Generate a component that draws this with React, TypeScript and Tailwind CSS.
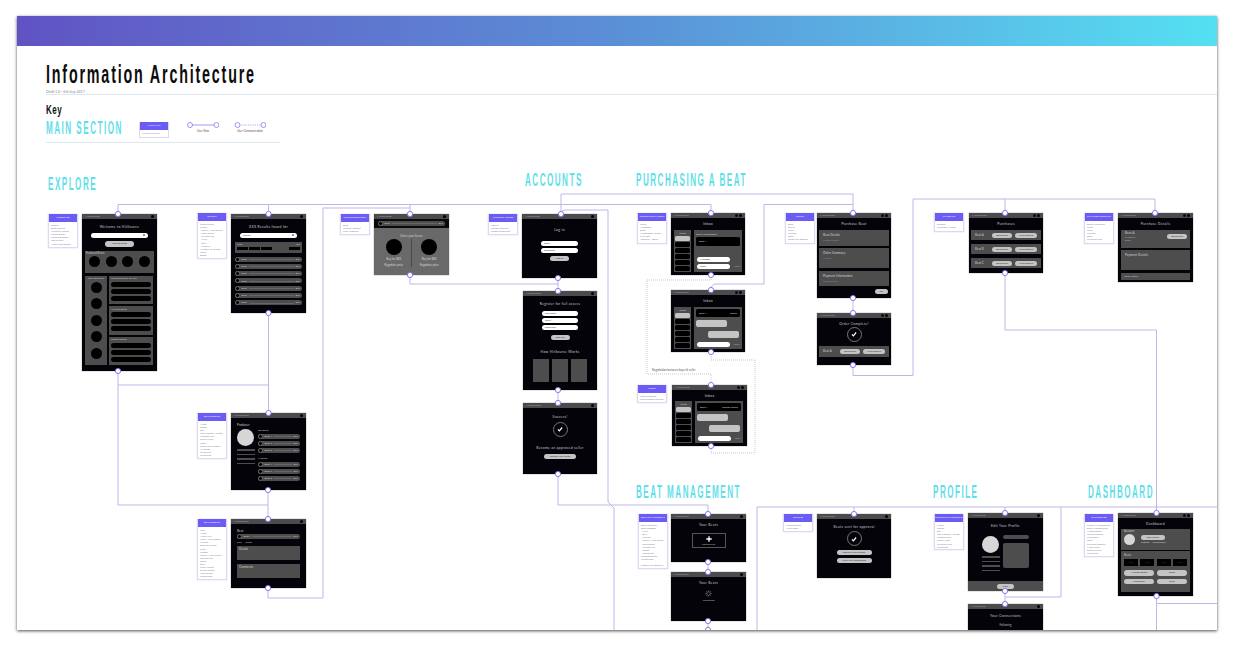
import React from "react";

const LINE = "#bdb7e8";
const solid = [
  "M118 214V204.500H711V213",
  "M268.500 204.500V214",
  "M410 204.500V214",
  "M561 214V194H853V213",
  "M561 214Q561 210 565 210H608V502L614 508V630",
  "M323 598V208H410",
  "M268 588V598H323",
  "M118 371V505H268",
  "M118 385H268",
  "M268.500 313V413",
  "M268 490V519",
  "M410 275V284H558",
  "M558 278V291",
  "M558 390V403",
  "M558 474V505H708V514",
  "M711 290Q711 284 716 284H764V204.500H853",
  "M853 298V313",
  "M853 365V375.500H913V199H1155V213",
  "M1005 199V213",
  "M1005 273V330H1156.500V513",
  "M757 630V507H1217",
  "M854 507V514",
  "M1005 507V513",
  "M1061 507V597H1005",
  "M1005 591V604",
  "M1156.500 596V630",
  "M1156.500 603.500H1217",
  "M708 562V572",
  "M708 621V630",
];
const dotted = [
  "M711 275V280H647V374H711V385",
  "M711 352V360H755V453H711V446",
];
const dots: [number, number][] = [
  [118, 214], [118, 371], [268.5, 214], [268.5, 313], [268.5, 413], [268, 490], [268, 519], [268, 588],
  [410, 214], [410, 275], [561, 214], [558, 278], [558, 291], [558, 390], [558, 403], [558, 474],
  [711, 213], [711, 275], [711, 290], [711, 352], [711, 385], [711, 446],
  [853, 213], [853, 298], [853, 313], [853, 365], [1005, 213], [1005, 273], [1155, 213],
  [708, 514], [708, 562], [708, 572], [708, 621], [708, 630],
  [854, 514], [1005, 513], [1005, 591], [1005, 604], [1156.5, 513], [1156.5, 596],
];

function Win({ cls, body = "bg-[#04030a]", two, children }: { cls: string; body?: string; two?: boolean; children: React.ReactNode }) {
  return (
    <div className={`absolute flex flex-col overflow-hidden font-['Lato','Liberation_Sans',sans-serif] shadow-[0_0_1px_rgba(0,0,0,0.6)] ${cls}`}>
      <div className="flex h-[5px] shrink-0 items-center justify-between bg-[#4b4b4d] px-[3px]">
        <span className="text-[2.2px] leading-none tracking-[0.3px] text-[#bbbbbb]">HITSOURCE</span>
        <span className="flex gap-[1.5px]">
          {two && <i className="h-[3px] w-[3px] rounded-full bg-[#0a0a0a]" />}
          <i className="h-[3px] w-[3px] rounded-full bg-black" />
        </span>
      </div>
      <div className={`flex min-h-0 flex-1 flex-col ${body}`}>{children}</div>
    </div>
  );
}

function Title({ mt, children }: { mt: string; children: React.ReactNode }) {
  return <div className={`${mt} h-[4px] shrink-0 text-center text-[3.4px] leading-[4px] tracking-[0.3px] text-[#c9c9c9]`}>{children}</div>;
}

function Note({ cls, title, items }: { cls: string; title: string; items: string[] }) {
  return (
    <div className={`absolute flex flex-col border border-t-0 border-[#dcd9f3] bg-white font-['Lato','Liberation_Sans',sans-serif] shadow-[0_0_1px_rgba(90,80,200,0.35)] ${cls}`}>
      <div className="flex h-[8px] shrink-0 items-center justify-center bg-[#6b5cf5] text-[2.4px] font-bold leading-none text-[#e8e6ff]">{title}</div>
      <div className="px-[2px] pt-[2px]">
        {items.map((t, i) => (
          <div key={i} className="h-[3.1px] whitespace-pre text-[2.6px] leading-[3.1px] text-[#8a8a9c]">{t}</div>
        ))}
      </div>
    </div>
  );
}

function Heading({ cls, children }: { cls: string; children: React.ReactNode }) {
  return (
    <div className={`absolute origin-left scale-x-[0.45] whitespace-nowrap font-['Liberation_Sans',sans-serif] text-[18px] font-bold leading-[13px] tracking-[3.3px] text-[#5fdfe8] ${cls}`}>
      {children}
    </div>
  );
}

function Pill({ cls, children, tone = "bg-[#c4c4c4] text-[#333333]" }: { cls: string; children?: React.ReactNode; tone?: string }) {
  return (
    <div className={`flex shrink-0 items-center justify-center rounded-full text-[2.6px] leading-none ${tone} ${cls}`}>{children}</div>
  );
}

function Input({ cls, children }: { cls: string; children?: React.ReactNode }) {
  return (
    <div className={`flex shrink-0 items-center rounded-full bg-white px-[3px] text-[2.6px] leading-none text-[#444444] ${cls}`}>{children}</div>
  );
}

function BeatRow({ cls, name = "Beat", fade = "bg-[#666666]" }: { cls: string; name?: string; fade?: string }) {
  return (
    <div className={`flex h-[5px] shrink-0 items-center rounded-full bg-[#4d4d4d] pr-[2px] text-[2.6px] leading-none text-[#cfcfcf] ${cls}`}>
      <i className="mr-[1.5px] h-[5px] w-[5px] shrink-0 rounded-full border-[0.5px] border-[#666] bg-black" />
      <span className="whitespace-nowrap">{name}</span>
      <i className={`mx-[2px] h-[0.5px] flex-1 ${fade}`} />
      <span>Buy</span>
    </div>
  );
}

function Check() {
  return (
    <div className="flex h-[15px] w-[15px] shrink-0 items-center justify-center rounded-full border-[0.5px] border-[#777777]">
      <svg viewBox="0 0 10 10" className="h-[6px] w-[6px]">
        <path d="M1.500 5.500L4 8L8.500 2.500" fill="none" stroke="#ffffff" strokeWidth="2" />
      </svg>
    </div>
  );
}

function Chats({ panel, children }: { panel: string; children: React.ReactNode }) {
  return (
    <div className={`flex gap-[3px] px-[3px] ${panel}`}>
      <div className="flex h-[42px] w-[17px] flex-col items-center bg-[#4d4d4d] pt-[1px]">
        <div className="h-[4px] text-[2.6px] leading-[4px] text-[#c9c9c9]">Chats</div>
        <div className="mt-[1px] flex flex-col gap-[1px]">
          <i className="h-[5px] w-[15px] rounded-[1.5px] bg-[#c4c4c4]" />
          {[0, 1, 2, 3, 4].map((i) => (
            <i key={i} className="h-[5px] w-[15px] rounded-[1.5px] bg-black" />
          ))}
        </div>
      </div>
      <div className="flex h-[42px] w-[48px] flex-col bg-[#4d4d4d] px-[2px] text-[2.6px] text-[#cfcfcf]">{children}</div>
    </div>
  );
}

function Convo({ status }: { status: string }) {
  return (
    <>
      <div className="mt-[2px] flex h-[8px] shrink-0 items-center justify-between rounded-[1.5px] bg-black px-[3px] leading-none">
        <span>Beat A</span>
        <span>{status}</span>
      </div>
      <i className="mt-[3px] h-[7px] w-[31px] shrink-0 rounded-[2px] bg-[#c4c4c4]" />
      <i className="ml-[12px] mt-[3.500px] h-[7px] w-[31px] shrink-0 rounded-[2px] bg-[#c4c4c4]" />
      <div className="mt-[4px] flex items-center justify-between leading-none">
        <Input cls="ml-[1px] h-[5px] w-[33px]" />
        <span className="text-[#a5a5a5]">Reply</span>
      </div>
    </>
  );
}

function Panel({ cls, label, sub }: { cls: string; label: string; sub?: string }) {
  return (
    <div className={`shrink-0 bg-[#4d4d4d] px-[4px] pt-[3px] ${cls}`}>
      <div className="text-[3.2px] leading-[4px] text-[#cfcfcf]">{label}</div>
      {sub && <div className="mt-[2px] text-[2.6px] leading-[3px] text-[#8c8c8c]">{sub}</div>}
    </div>
  );
}

function PurchaseRow({ label, mt }: { label: string; mt: string }) {
  return (
    <div className={`mx-[2px] flex h-[10px] shrink-0 items-center bg-[#4d4d4d] pl-[4px] text-[3px] text-[#cfcfcf] ${mt}`}>
      <span className="w-[17px]">{label}</span>
      <Pill cls="h-[5px] w-[20px]">Download</Pill>
      <Pill cls="ml-[3px] h-[5px] w-[22px]">View Details</Pill>
    </div>
  );
}

function Circles({ n, cls }: { n: number; cls: string }) {
  return <>{Array.from({ length: n }, (_, i) => <i key={i} className={`shrink-0 rounded-full bg-black ${cls}`} />)}</>;
}

function Bars({ n }: { n: number }) {
  return <div className="mt-[1.500px] flex flex-col gap-[2px] px-[2px]">{Array.from({ length: n }, (_, i) => <i key={i} className="h-[5px] rounded-full bg-black" />)}</div>;
}

export default function App() {
  return (
    <div className="h-[646px] w-[1235px] overflow-hidden bg-white pl-[17px] pt-[16px]">
      <div className="relative flex h-[614px] w-[1200px] flex-col overflow-hidden bg-white shadow-[0_1px_3px_rgba(0,0,0,0.7)]">
        <div className="h-[30px] shrink-0 bg-gradient-to-r from-[#6053c4] via-[#5a8fd6] to-[#54e0f2]" />
        <div className="ml-[29px] h-[49px] shrink-0 border-b border-[#dde9f0] pt-[18px]">
          <h1 className="inline-block origin-left scale-x-[0.55] whitespace-nowrap font-['Liberation_Sans',sans-serif] text-[26px] font-bold leading-[21px] tracking-[3.300px] text-[#0c0c0c]">
            Information Architecture
          </h1>
          <div className="mt-[1px] font-['Lato','Liberation_Sans',sans-serif] text-[3.6px] leading-[4px] text-[#888888]">Draft 1.0 - 6th Sep 2017</div>
        </div>
        <div className="ml-[29px] flex h-[48px] w-[234px] shrink-0 flex-col border-b border-[#dde9f0] pt-[9px]">
          <div className="origin-left scale-x-[0.62] font-['Liberation_Sans',sans-serif] text-[13px] font-bold leading-[12px] tracking-[0.8px] text-[#111111]">Key</div>
          <div className="mt-[6px] flex items-start">
            <div className="w-[93px] origin-left scale-x-[0.45] whitespace-nowrap font-['Liberation_Sans',sans-serif] text-[18px] font-bold leading-[13px] tracking-[3.3px] text-[#5fdfe8]">MAIN SECTION</div>
            <div className="flex h-[16px] w-[30px] flex-col border border-t-0 border-[#dcd9f3] font-['Lato',sans-serif]">
              <div className="flex h-[8px] shrink-0 items-center justify-center bg-[#6b5cf5] text-[2.4px] leading-none text-[#e8e6ff]">PAGE TITLE</div>
              <div className="px-[2px] pt-[1.500px] text-[2.6px] leading-[3px] text-[#999999]">Content Guides</div>
            </div>
            <div className="ml-[18px] flex w-[32px] flex-col items-center font-['Lato',sans-serif]">
              <svg width="32" height="6" viewBox="0 0 32 6">
                <path d="M5 3H27" stroke="#8a7ee6" strokeWidth="0.8" />
                <circle cx="3" cy="3" r="2.5" fill="#fff" stroke="#8a7ee6" strokeWidth="0.8" />
                <circle cx="29.500" cy="3" r="2.5" fill="#fff" stroke="#8a7ee6" strokeWidth="0.8" />
              </svg>
              <span className="mt-[1px] text-[2.8px] leading-[4px] text-[#555555]">User flow</span>
            </div>
            <div className="ml-[15px] flex w-[32px] flex-col items-center font-['Lato',sans-serif]">
              <svg width="32" height="6" viewBox="0 0 32 6">
                <path d="M5 3H27" stroke="#8a7ee6" strokeWidth="0.8" strokeDasharray="0.8 1" />
                <circle cx="3.500" cy="3" r="2.5" fill="#fff" stroke="#8a7ee6" strokeWidth="0.8" />
                <circle cx="30.500" cy="3" r="1.500" fill="#fff" stroke="#8a7ee6" strokeWidth="0" />
                <circle cx="29.500" cy="3" r="2.5" fill="#fff" stroke="#8a7ee6" strokeWidth="0.8" />
              </svg>
              <span className="mt-[1px] whitespace-nowrap text-[2.8px] leading-[4px] text-[#555555]">User Communication</span>
            </div>
          </div>
        </div>

        {/* free canvas, in page coordinates */}
        <div className="absolute left-[-17px] top-[-16px] h-[646px] w-[1235px]">
          <Heading cls="left-[48px] top-[178px]">EXPLORE</Heading>
          <Heading cls="left-[525px] top-[174px]">ACCOUNTS</Heading>
          <Heading cls="left-[636px] top-[174px]">PURCHASING A BEAT</Heading>
          <Heading cls="left-[636px] top-[486px]">BEAT MANAGEMENT</Heading>
          <Heading cls="left-[933px] top-[486px]">PROFILE</Heading>
          <Heading cls="left-[1088px] top-[486px]">DASHBOARD</Heading>

          <Note cls="left-[48px] top-[214px] h-[34px] w-[30px]" title="HOMEPAGE" items={["Search", "Beat Upload", "Account Access", "Latest Beats", "Featured Beats", "Top Sellers", "Most Liked Beats"]} />
          <Note cls="left-[197px] top-[213px] h-[46px] w-[30px]" title="SEARCH" items={["Search term", "Filters", "  Genre / Sub Genre", "  Instrument", "  Sounds like", "  Price", "  BPM", "  License", "Number of results", "Users", "Beats"]} />
          <Note cls="left-[340px] top-[214px] h-[21px] w-[30px]" title="LICENSE SELECTION" items={["Beat", "License options", "Price Options"]} />
          <Note cls="left-[488px] top-[214px] h-[21px] w-[30px]" title="ACCOUNT ACCESS" items={["Sign in", "Create account", "Forgot Password"]} />
          <Note cls="left-[637px] top-[213px] h-[31px] w-[30px]" title="NEGOTIATION INBOX" items={["Users", "Messages", "Beat", "Negotiation Status", "Price Bid", "Approve / Deny"]} />
          <Note cls="left-[785px] top-[213px] h-[31px] w-[30px]" title="STRIPE" items={["Beat", "Buyer", "Price", "License", "Date", "Stripe Pay Details"]} />
          <Note cls="left-[637px] top-[385px] h-[18px] w-[30px]" title="INBOX" items={["Conversations", "Conversation thread"]} />
          <Note cls="left-[197px] top-[413px] h-[46px] w-[30px]" title="BEAT PROFILE" items={["Name", "Image", "Bio", "Top 5 Beats / Songs", "Contact Info", "Social Links", "Share", "Seller/User Status", "All Beats", "Followers", "Following"]} />
          <Note cls="left-[197px] top-[519px] h-[61px] w-[30px]" title="BEAT PROFILE" items={["Title", "Name", "Audio File", "Price / Sale Status", "License", "Beat on Shops", "Likes", "Length", "Genre / Sub Genre", "Sounds like", "Share", "BPM", "Track Count", "Stems Status", "Instrument", "Comments"]} />
          <Note cls="left-[934px] top-[213px] h-[19px] w-[30px]" title="PAYMENTS" items={["Receipt", "Purchase History"]} />
          <Note cls="left-[1084px] top-[213px] h-[31px] w-[30px]" title="E-PAYMENT DETAILS" items={["Beat Purchased", "Seller", "Price", "License", "Date", "Payment Info"]} />
          <Note cls="left-[638px] top-[514px] h-[55px] w-[30px]" title="BEAT MANAGEMENT" items={["Beat Uploader", "Beat Settings", "  Price", "  BPM", "  License", "  Genre / Sub Genre", "  Instrument", "  Sounds like", "  Stems", "  Structures", "Existing Beats", "Comments", "", "Submit for approval"]} />
          <Note cls="left-[783px] top-[514px] h-[18px] w-[30px]" title="UPLOAD" items={["Confirmation", "Next Steps"]} />
          <Note cls="left-[934px] top-[514px] h-[36px] w-[30px]" title="PROFILE MANAGEMENT" items={["Name", "Image", "Bio", "Top 5 Beats / Songs", "Contact Info", "Social Links", "Payment Info", "Following"]} />
          <Note cls="left-[1084px] top-[514px] h-[43px] w-[30px]" title="DASHBOARD" items={["Profile Management", "Beat Management", "Notifications", "Conversations", "Purchases", "Sales", "Payment Details", "Most Liked", "Beats Played", "Followers"]} />

          {/* Homepage */}
          <Win cls="left-[82px] top-[214px] h-[157px] w-[75px]">
            <Title mt="mt-[6px]">Welcome to HitSource</Title>
            <Input cls="mx-[9px] mt-[3.500px] h-[5px] justify-end"><i className="h-[2px] w-[2px] rounded-full border-[0.5px] border-[#444]" /></Input>
            <Pill cls="mx-auto mt-[3.500px] h-[5.500px] w-[29px] text-[#222222]">Upload beats</Pill>
            <div className="mx-[3px] mt-[4px] h-[22px] shrink-0 bg-[#4d4d4d] px-[1px]">
              <div className="text-[2.8px] leading-[4px] text-[#c9c9c9]">Featured Beats</div>
              <div className="mt-[1px] flex justify-around"><Circles n={4} cls="h-[11px] w-[11px]" /></div>
            </div>
            <div className="mx-[3px] mt-[3px] flex gap-[2px]">
              <div className="flex h-[89px] w-[22px] flex-col items-center bg-[#4d4d4d]">
                <div className="text-[2.6px] leading-[4px] text-[#c9c9c9]">Top Producers</div>
                <div className="mt-[2px] flex flex-col gap-[5.500px]"><Circles n={5} cls="h-[11px] w-[11px]" /></div>
              </div>
              <div className="flex w-[44px] flex-col gap-[2px]">
                {["Recommended for you", "Newest Beats", "Popular Beats"].map((t) => (
                  <div key={t} className="h-[28.500px] bg-[#4d4d4d] pt-[0.500px]">
                    <div className="px-[2px] text-[2.6px] leading-[4px] text-[#c9c9c9]">{t}</div>
                    <Bars n={3} />
                  </div>
                ))}
              </div>
            </div>
          </Win>

          {/* Search */}
          <Win cls="left-[231px] top-[214px] h-[99px] w-[75px]">
            <Title mt="mt-[6px]">XXX Results found for</Title>
            <Input cls="mx-[9px] mt-[3.500px] h-[5px] justify-between"><span>search</span><i className="h-[2px] w-[2px] rounded-full border-[0.5px] border-[#444]" /></Input>
            <div className="mx-[4px] mt-[4px] h-[11px] shrink-0 bg-[#4d4d4d] px-[2px] pt-[1px]">
              <div className="flex justify-between text-[2.4px] leading-[3px] text-[#c9c9c9]"><span>Filter</span><span>Sort</span></div>
              <div className="mt-[1px] flex gap-[1px]">
                <i className="h-[3px] w-[11px] bg-black" /><i className="h-[3px] w-[11px] bg-black" /><i className="h-[3px] w-[11px] bg-black" />
                <i className="ml-auto h-[3px] w-[11px] bg-black" />
              </div>
            </div>
            <div className="mx-[4px] mt-[4px] flex flex-col gap-[2.300px]">
              {[0, 1, 2, 3, 4, 5, 6].map((i) => <BeatRow key={i} cls="" />)}
            </div>
          </Win>

          {/* License */}
          <Win cls="left-[374px] top-[214px] h-[61px] w-[75px]" body="bg-[#696969]">
            <div className="flex h-[9px] shrink-0 items-center bg-[#0a0a0c] px-[4px]"><BeatRow cls="w-full bg-[#3f3f3f]" /></div>
            <div className="mt-[5.500px] text-center text-[2.8px] leading-[4px] text-[#d0d0d0]">Select your license</div>
            <div className="relative mt-[1.500px] flex justify-around px-[3px] text-center text-[2.8px] leading-[4px] text-[#d8d8d8]">
              <div className="flex w-[32px] flex-col items-center"><i className="mb-[2px] h-[16px] w-[16px] rounded-full bg-black" />Buy for $XX<span className="mt-[1.500px]">Negotiate price</span></div>
              <i className="h-[28px] w-[0.5px] bg-[#4a4a4a]" />
              <div className="flex w-[32px] flex-col items-center"><i className="mb-[2px] h-[16px] w-[16px] rounded-full bg-black" />Buy for $XX<span className="mt-[1.500px]">Negotiate price</span></div>
            </div>
          </Win>

          {/* Log in */}
          <Win cls="left-[522px] top-[214px] h-[64px] w-[75px]">
            <Title mt="mt-[9px]">Log in</Title>
            <Input cls="mx-[19px] mt-[9px] h-[5px]">email</Input>
            <Input cls="mx-[19px] mt-[2px] h-[5px]">password</Input>
            <Pill cls="mx-auto mt-[3px] h-[5px] w-[19px]">Log in</Pill>
          </Win>

          {/* Register */}
          <Win cls="left-[523px] top-[291px] h-[99px] w-[74px]">
            <Title mt="mt-[6px]">Register for full access</Title>
            <Input cls="mx-[19px] mt-[5px] h-[5px]">username</Input>
            <Input cls="mx-[19px] mt-[2px] h-[5px]">email</Input>
            <Input cls="mx-[19px] mt-[2px] h-[5px]">password</Input>
            <Pill cls="mx-auto mt-[5px] h-[5px] w-[19px]">Sign Up</Pill>
            <Title mt="mt-[10px]">How HitSource Works</Title>
            <div className="mt-[5px] flex justify-center gap-[3px]">
              <i className="h-[23px] w-[16px] bg-[#4d4d4d]" /><i className="h-[23px] w-[16px] bg-[#4d4d4d]" /><i className="h-[23px] w-[16px] bg-[#4d4d4d]" />
            </div>
          </Win>

          {/* Success */}
          <Win cls="left-[523px] top-[403px] h-[71px] w-[74px]">
            <Title mt="mt-[6.500px]">Success!</Title>
            <div className="mt-[3px] flex justify-center"><Check /></div>
            <Title mt="mt-[9px]">Become an approved seller</Title>
            <Pill cls="mx-auto mt-[4px] h-[5px] w-[32px]">Upload your beats</Pill>
          </Win>

          {/* Producer */}
          <Win cls="left-[231px] top-[413px] h-[77px] w-[75px]">
            <div className="flex gap-[3px] pl-[6px] pr-[6px] pt-[5px]">
              <div className="flex w-[18px] shrink-0 flex-col">
                <div className="text-[3.2px] leading-[4px] text-[#c9c9c9]">Producer</div>
                <i className="mt-[2px] h-[17px] w-[17px] rounded-full bg-[#d6d6d6]" />
                <div className="mt-[3px] flex flex-col gap-[3px]">
                  {[0, 1, 2, 3].map((i) => <i key={i} className="h-[1.500px] bg-[#4d4d4d]" />)}
                </div>
              </div>
              <div className="flex min-w-0 flex-1 flex-col gap-[2px] pt-[6px]">
                <div className="text-[2.4px] leading-[3px] text-[#c9c9c9]">Top Beats</div>
                <BeatRow cls="" name="Beat 1" />
                <BeatRow cls="" name="Beat 2" />
                <BeatRow cls="" name="Beat 3" />
                <div className="mt-[1.500px] text-[2.4px] leading-[3px] text-[#c9c9c9]">All Beats</div>
                <BeatRow cls="" name="Beat 1" />
                <BeatRow cls="" name="Beat 2" />
                <BeatRow cls="" name="Beat 3" />
              </div>
            </div>
          </Win>

          {/* Beat */}
          <Win cls="left-[231px] top-[519px] h-[69px] w-[75px]">
            <div className="flex flex-col px-[6px] pt-[5px]">
              <div className="text-[3.2px] leading-[4px] text-[#c9c9c9]">Beat</div>
              <BeatRow cls="mt-[1px]" name="Beat 1" />
              <div className="mt-[1.500px] flex gap-[4px] text-[2.6px] leading-[3px] text-[#c9c9c9]"><span>Like</span><span>Share</span></div>
              <div className="mt-[2px] h-[14.500px] bg-[#4d4d4d] px-[2px] pt-[1px] text-[3px] leading-[4px] text-[#cfcfcf]">Details</div>
              <div className="mt-[3.500px] h-[14.500px] bg-[#4d4d4d] px-[2px] pt-[1px] text-[3px] leading-[4px] text-[#cfcfcf]">Comments</div>
            </div>
          </Win>

          {/* Inbox 1 */}
          <Win cls="left-[671px] top-[213px] h-[62px] w-[74px]" two>
            <Title mt="mt-[4px]">Inbox</Title>
            <Chats panel="mt-[4px]">
              <div className="pt-[2px] leading-[4px]">Start a negotiation</div>
              <div className="mt-[1px] flex h-[9px] shrink-0 items-center rounded-[1.5px] bg-black px-[3px] leading-none">Beat A</div>
              <Input cls="ml-[1px] mt-[11px] h-[5px] w-[33px]">Message</Input>
              <div className="mt-[2px] flex items-center justify-between leading-none">
                <Input cls="ml-[1px] h-[5px] w-[33px]">Offer</Input>
                <span className="text-[#a5a5a5]">Send</span>
              </div>
            </Chats>
          </Win>

          {/* Inbox 2 */}
          <Win cls="left-[671px] top-[290px] h-[62px] w-[74px]" two>
            <Title mt="mt-[4px]">Inbox</Title>
            <Chats panel="mt-[4px]"><Convo status="Status" /></Chats>
          </Win>

          {/* Inbox 3 */}
          <Win cls="left-[672px] top-[385px] h-[61px] w-[75px]" two>
            <Title mt="mt-[4px]">Inbox</Title>
            <Chats panel="mt-[3px]"><Convo status="Update Status" /></Chats>
          </Win>

          <div className="absolute left-[651px] top-[368px] bg-white px-[1px] font-['Lato',sans-serif] text-[2.8px] leading-[4px] text-[#555555]">Negotiation between buyer &amp; seller</div>

          {/* Purchase beat */}
          <Win cls="left-[817px] top-[213px] h-[85px] w-[74px]" two>
            <Title mt="mt-[4px]">Purchase Beat</Title>
            <div className="mx-[2px] mt-[4px] flex flex-col">
              <Panel cls="h-[16px]" label="Beat Details" sub="License Terms" />
              <Panel cls="mt-[2px] h-[20px]" label="Order Summary" sub="Pricing" />
              <Panel cls="mt-[3px] h-[15px]" label="Payment Information" sub="Stripe Details" />
              <Pill cls="ml-auto mr-[1px] mt-[3px] h-[5px] w-[13px]">Pay</Pill>
            </div>
          </Win>

          {/* Order complete */}
          <Win cls="left-[817px] top-[313px] h-[52px] w-[74px]" two>
            <Title mt="mt-[3.500px]">Order Complete!</Title>
            <div className="mt-[1px] flex justify-center"><Check /></div>
            <div className="mx-[2px] mt-[4px] flex h-[11px] items-center bg-[#4d4d4d] pl-[4px] text-[3px] text-[#cfcfcf]">
              <span className="w-[17px]">Beat A</span>
              <Pill cls="h-[5px] w-[20px]">Download</Pill>
              <Pill cls="ml-[3px] h-[5px] w-[22px]">View Details</Pill>
            </div>
          </Win>

          {/* Purchases */}
          <Win cls="left-[969px] top-[213px] h-[60px] w-[74px]" two>
            <Title mt="mt-[4px]">Purchases</Title>
            <PurchaseRow label="Beat A" mt="mt-[4px]" />
            <PurchaseRow label="Beat B" mt="mt-[4px]" />
            <PurchaseRow label="Beat C" mt="mt-[4px]" />
          </Win>

          {/* Purchase details */}
          <Win cls="left-[1118px] top-[213px] h-[69px] w-[75px]" two>
            <Title mt="mt-[4px]">Purchase Details</Title>
            <div className="mx-[3px] mt-[4px] flex h-[18px] shrink-0 justify-between bg-[#4d4d4d] pl-[4px] pr-[3px] pt-[2px] text-[2.6px] leading-[3.500px] text-[#a8a8a8]">
              <div><div className="text-[3.2px] text-[#cfcfcf]">Beat A</div>Producer<br />Date</div>
              <Pill cls="mt-[2px] h-[5px] w-[20px]">Download</Pill>
            </div>
            <Panel cls="mx-[3px] mt-[2px] h-[20px]" label="Payment Details" />
            <div className="mx-[3px] mt-[3px] flex h-[7px] shrink-0 items-center bg-[#4d4d4d] px-[3px] text-[2.6px] leading-none text-[#cfcfcf]">Chat History</div>
          </Win>

          {/* Your beats upload */}
          <Win cls="left-[671px] top-[514px] h-[48px] w-[75px]">
            <Title mt="mt-[4px]">Your Beats</Title>
            <div className="mx-auto mt-[6px] flex h-[15px] w-[34px] flex-col items-center justify-center border-[0.5px] border-[#555555]">
              <svg viewBox="0 0 10 10" className="h-[6px] w-[6px]"><path d="M5 0.500V9.500M0.500 5H9.500" stroke="#fff" strokeWidth="2.200" /></svg>
              <span className="mt-[1px] text-[2.6px] leading-[3px] text-[#bbbbbb]">Upload files</span>
            </div>
          </Win>

          {/* Your beats uploading */}
          <Win cls="left-[671px] top-[572px] h-[49px] w-[75px]">
            <Title mt="mt-[4px]">Your Beats</Title>
            <div className="mt-[5px] flex justify-center">
              <svg viewBox="0 0 12 12" className="h-[7px] w-[7px]" fill="none" stroke="#aaaaaa" strokeWidth="0.800">
                <circle cx="6" cy="6" r="3" />
                <path d="M6 0.500V2.500M6 9.500V11.500M0.500 6H2.500M9.500 6H11.500M2 2L3.500 3.500M8.500 8.500L10 10M10 2L8.500 3.500M3.500 8.500L2 10" />
              </svg>
            </div>
            <div className="mt-[2px] text-center text-[2.6px] leading-[3px] text-[#bbbbbb]">Uploading</div>
          </Win>

          {/* Beats sent */}
          <Win cls="left-[817px] top-[514px] h-[64px] w-[74px]">
            <Title mt="mt-[6px]">Beats sent for approval</Title>
            <div className="mt-[2px] flex justify-center"><Check /></div>
            <Pill cls="mx-auto mt-[4px] h-[5px] w-[35px]">Improve your profile</Pill>
            <Pill cls="mx-auto mt-[3px] h-[5px] w-[35px]">View your dashboard</Pill>
          </Win>

          {/* Edit profile */}
          <Win cls="left-[968px] top-[513px] h-[78px] w-[75px]">
            <Title mt="mt-[6px]">Edit Your Profile</Title>
            <div className="mt-[3px] flex gap-[3px] px-[14px]">
              <div className="flex w-[18px] shrink-0 flex-col pt-[5px]">
                <i className="h-[17px] w-[17px] rounded-full bg-[#d6d6d6]" />
                <div className="mt-[3px] flex flex-col gap-[3px]">
                  {[0, 1, 2, 3].map((i) => <i key={i} className="h-[1.500px] bg-[#4d4d4d]" />)}
                </div>
              </div>
              <div className="flex flex-1 flex-col gap-[4px] pt-[4px]">
                <i className="h-[4px] rounded-full bg-[#4d4d4d]" />
                <i className="h-[25px] rounded-[2px] bg-[#4d4d4d]" />
              </div>
            </div>
            <div className="mt-auto flex h-[10px] shrink-0 items-center justify-center bg-[#4d4d4d]"><Pill cls="h-[5px] w-[17px]">Save</Pill></div>
          </Win>

          {/* Connections */}
          <Win cls="left-[968px] top-[604px] h-[50px] w-[75px]">
            <Title mt="mt-[5px]">Your Connections</Title>
            <div className="mt-[5px] text-center text-[2.8px] leading-[4px] text-[#bbbbbb]">Following</div>
          </Win>

          {/* Dashboard */}
          <Win cls="left-[1118px] top-[513px] h-[83px] w-[75px]" two>
            <Title mt="mt-[4px]">Dashboard</Title>
            <div className="mx-[3px] mt-[2.500px] h-[21px] shrink-0 bg-[#4d4d4d] px-[3px] text-[#c9c9c9]">
              <div className="text-[2.8px] leading-[4px]">Account</div>
              <div className="flex gap-[6px]">
                <i className="mt-[1px] h-[11px] w-[11px] shrink-0 rounded-full bg-[#d6d6d6]" />
                <div className="flex flex-col pt-[2px]">
                  <Pill cls="h-[5px] w-[24px]">Edit Profile</Pill>
                  <div className="mt-[1px] flex gap-[3px] whitespace-nowrap text-[2.4px] leading-[3px]"><span>Settings</span><span>Connections</span></div>
                </div>
              </div>
            </div>
            <div className="mx-[3px] mt-[1px] h-[41px] shrink-0 bg-[#4d4d4d] px-[3px] pt-[2px]">
              <div className="text-[2.8px] leading-[4px] text-[#c9c9c9]">Beats</div>
              <div className="mt-[2px] flex justify-between">
                {["Sales", "Plays", "Likes", "Views"].map((t) => (
                  <div key={t} className="flex h-[7.500px] w-[14px] items-center justify-center bg-black text-[2.2px] text-[#3f3f3f]">{t}</div>
                ))}
              </div>
              <div className="mt-[4px] grid grid-cols-2 gap-x-[3px] gap-y-[3px]">
                <Pill cls="h-[5.500px]">Manage Beats</Pill>
                <Pill cls="h-[5.500px]">Inbox</Pill>
                <Pill cls="h-[5.500px]">Purchases</Pill>
                <Pill cls="h-[5.500px]">Sales</Pill>
              </div>
            </div>
          </Win>

          <svg className="pointer-events-none absolute left-0 top-0" width="1235" height="646" viewBox="0 0 1235 646" fill="none">
            {solid.map((d, i) => <path key={i} d={d} stroke={LINE} strokeWidth="1" />)}
            {dotted.map((d, i) => <path key={i} d={d} stroke="#b9b5cf" strokeWidth="0.8" strokeDasharray="1 1" />)}
            {dots.map(([x, y], i) => <circle key={i} cx={x} cy={y} r="2.6" fill="#ffffff" stroke="#7d6ee8" strokeWidth="0.9" />)}
          </svg>
        </div>
      </div>
    </div>
  );
}
